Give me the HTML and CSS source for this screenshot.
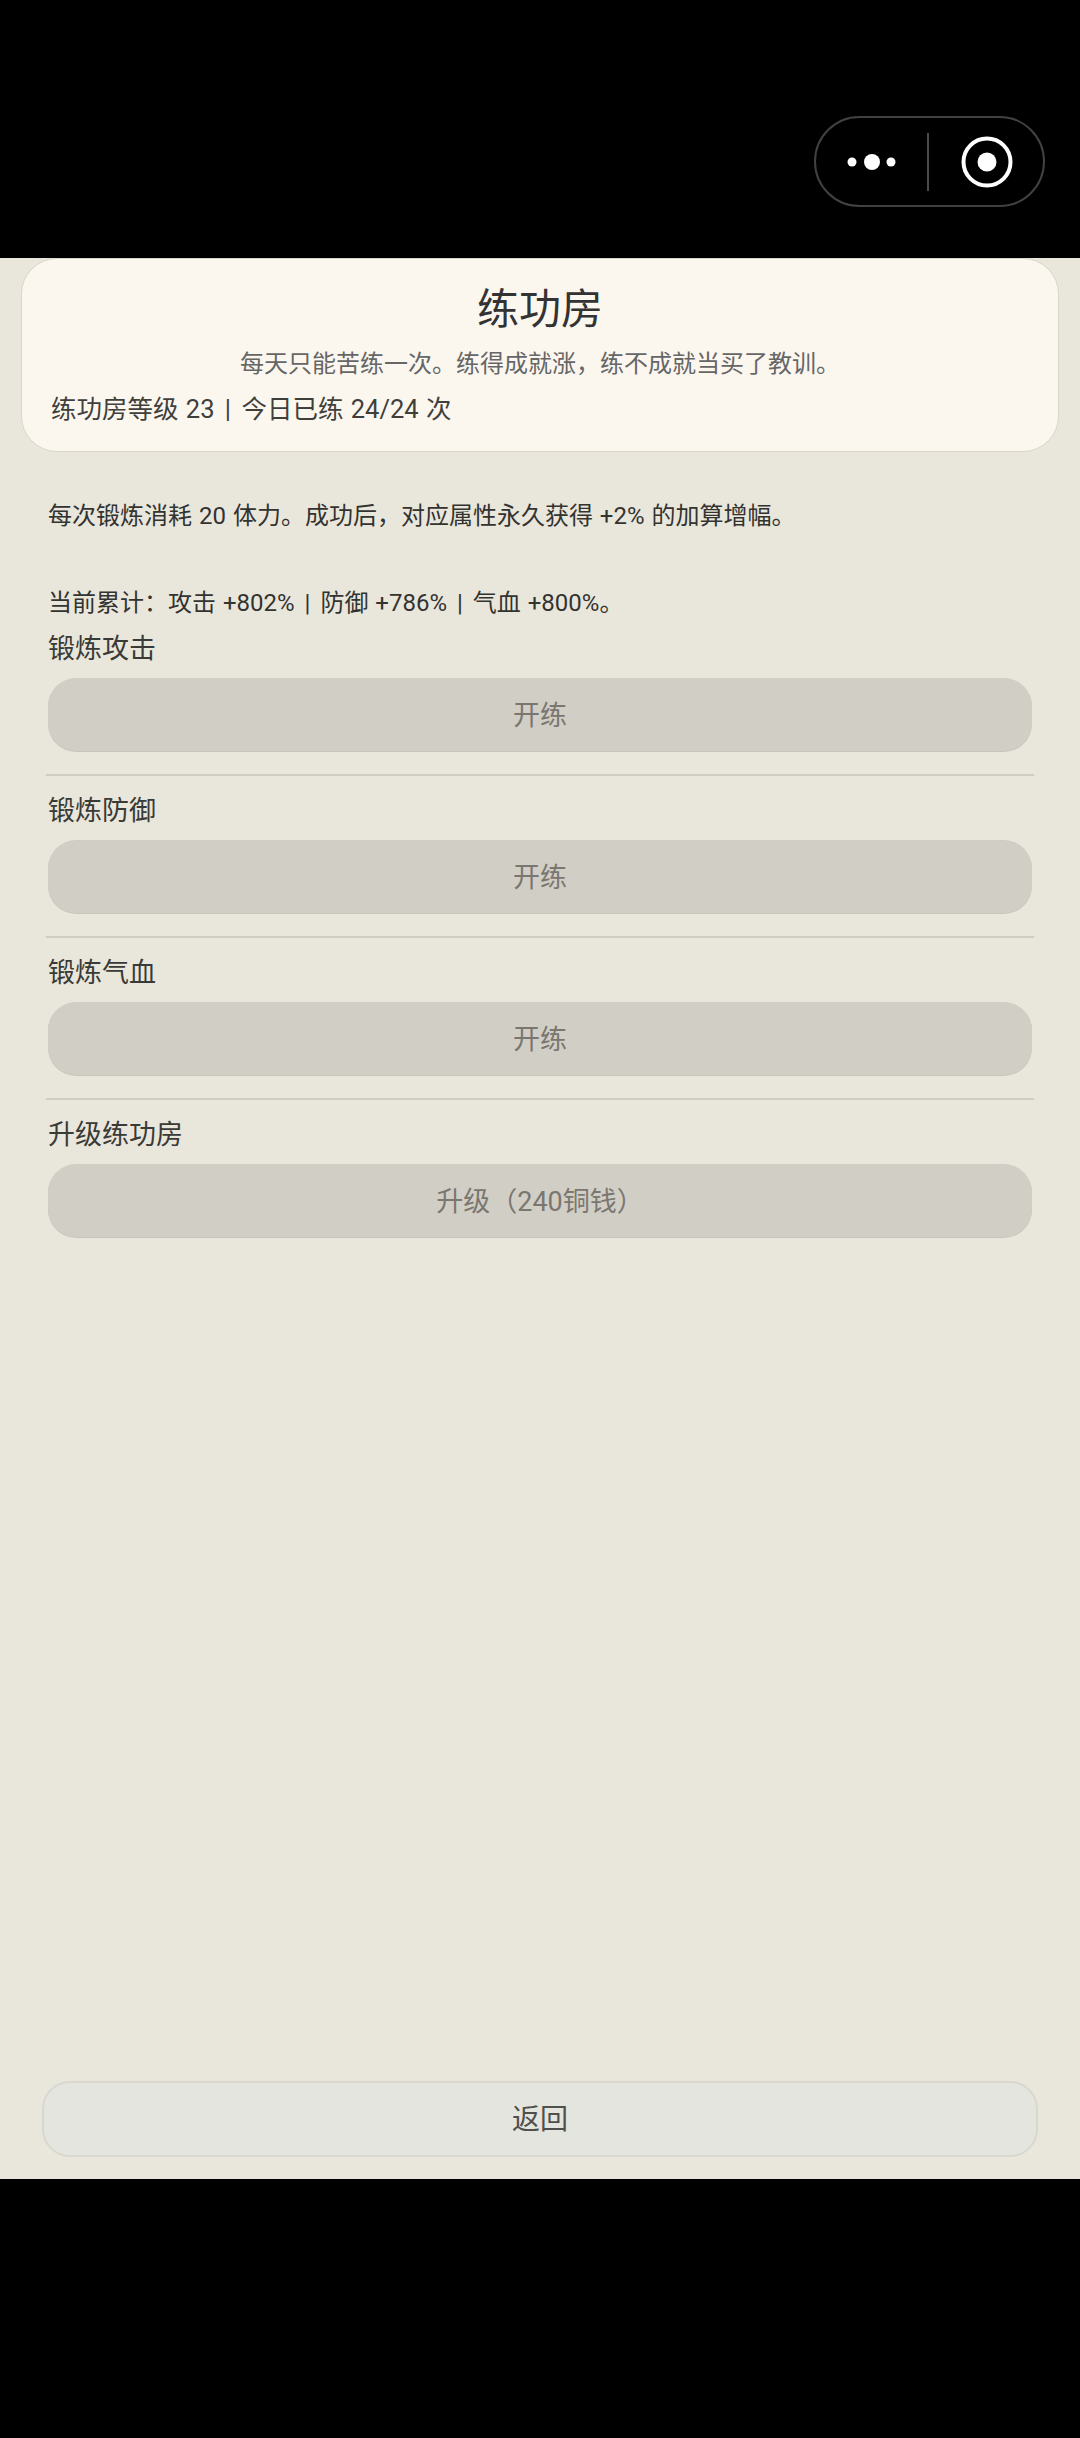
FILE: index.html
```html
<!DOCTYPE html>
<html lang="zh-CN">
<head>
    <meta charset="UTF-8">
    <meta name="viewport" content="width=device-width, initial-scale=1.0">
    <title>练功房</title>
    <link rel="stylesheet" href="styles.css">
</head>
<body>
    <div class="top-bar">
        <div class="capsule">
            <svg class="capsule-more" width="60" height="20" viewBox="0 0 60 20">
                <circle cx="9" cy="10" r="4.5" fill="#fff"/>
                <circle cx="29" cy="10" r="8" fill="#fff"/>
                <circle cx="48" cy="10" r="4.5" fill="#fff"/>
            </svg>
            <div class="capsule-line"></div>
            <svg class="capsule-close" width="52" height="52" viewBox="0 0 52 52">
                <circle cx="26" cy="26" r="23.5" fill="none" stroke="#fff" stroke-width="4"/>
                <circle cx="26" cy="26" r="9.5" fill="#fff"/>
            </svg>
        </div>
    </div>
    <div class="page">
        <div class="head-card">
            <h1 class="head-title">练功房</h1>
            <div class="head-sub">每天只能苦练一次。练得成就涨，练不成就当买了教训。</div>
            <div class="head-info">练功房等级 23 <span class="pipe">|</span> 今日已练 24/24 次</div>
        </div>
        <div class="intro">每次锻炼消耗 20 体力。成功后，对应属性永久获得 +2% 的加算增幅。<br><br>当前累计：攻击 +802% <span class="pipe">|</span> 防御 +786% <span class="pipe">|</span> 气血 +800%。</div>
        <div class="train-list">
            <div class="train-item">
                <div class="train-label">锻炼攻击</div>
                <button class="train-button" disabled>开练</button>
            </div>
            <div class="train-item">
                <div class="train-label">锻炼防御</div>
                <button class="train-button" disabled>开练</button>
            </div>
            <div class="train-item">
                <div class="train-label">锻炼气血</div>
                <button class="train-button" disabled>开练</button>
            </div>
            <div class="train-item">
                <div class="train-label">升级练功房</div>
                <button class="train-button" disabled>升级（240铜钱）</button>
            </div>
        </div>
        <button class="back-button">返回</button>
    </div>
    <div class="bottom-bar"></div>
</body>
</html>
```

FILE: styles.css
```css
* {
    box-sizing: border-box;
}

body {
    margin: 0;
    height: 2438px;
    display: flex;
    flex-direction: column;
    background-color: #000;
    color: #333;
    font-family: Roboto, "Noto Sans CJK SC", sans-serif;
}

.top-bar {
    height: 258px;
    padding: 116px 35px 0 0;
    display: flex;
    justify-content: flex-end;
    align-items: flex-start;
    background-color: #000;
}

.capsule {
    width: 231px;
    height: 91px;
    border: 2px solid #414141;
    border-radius: 46px;
    display: flex;
    align-items: center;
    padding-left: 27px;
}

.capsule-line {
    width: 2px;
    height: 58px;
    margin-left: 24px;
    background-color: #4a4a4a;
}

.capsule-close {
    margin-left: 32px;
}

.page {
    flex: 1;
    display: flex;
    flex-direction: column;
    background-color: #e9e7dc;
}

.head-card {
    height: 194px;
    margin: 0 21px;
    padding-top: 23px;
    background-color: #fbf7ef;
    border: 1px solid #d9d6c9;
    border-radius: 36px;
}

.head-title {
    margin: 0;
    font-size: 42px;
    font-weight: 400;
    line-height: 56px;
    text-align: center;
    color: #333;
}

.head-sub {
    margin-top: 9px;
    font-size: 24px;
    line-height: 34px;
    text-align: center;
    color: #666;
}

.head-info {
    margin-top: 10px;
    padding-left: 29px;
    font-size: 25.5px;
    word-spacing: 1px;
    line-height: 36px;
    color: #3f3f3c;
}

.pipe {
    margin: 0 3px;
}

.intro {
    margin: 43px 48px 0;
    font-size: 24px;
    word-spacing: 1px;
    line-height: 43.5px;
    color: #333330;
}

.train-list {
    margin: 4px 46px 0;
    display: flex;
    flex-direction: column;
    gap: 16px;
}

.train-item {
    padding: 0 2px 23px;
    border-bottom: 2px solid #cfccc1;
}

.train-item:last-child {
    border-bottom: none;
}

.train-label {
    height: 36px;
    margin-bottom: 12px;
    font-size: 27px;
    line-height: 38px;
    color: #3a3a37;
}

.train-button {
    display: block;
    width: 100%;
    height: 73px;
    padding-bottom: 3px;
    border: none;
    border-radius: 28px;
    background-color: #d1cec6;
    color: #7a7770;
    font-family: inherit;
    font-size: 27px;
    box-shadow: 0 1px 0 #c9c6bc;
}

.back-button {
    height: 76px;
    margin: auto 42px 22px 42px;
    padding-bottom: 5px;
    border: 2px solid #d8d8d0;
    border-radius: 28px;
    background-color: #e4e5de;
    color: #4f4f4b;
    font-family: inherit;
    font-size: 28px;
}

.bottom-bar {
    height: 259px;
    background-color: #000;
}
```
